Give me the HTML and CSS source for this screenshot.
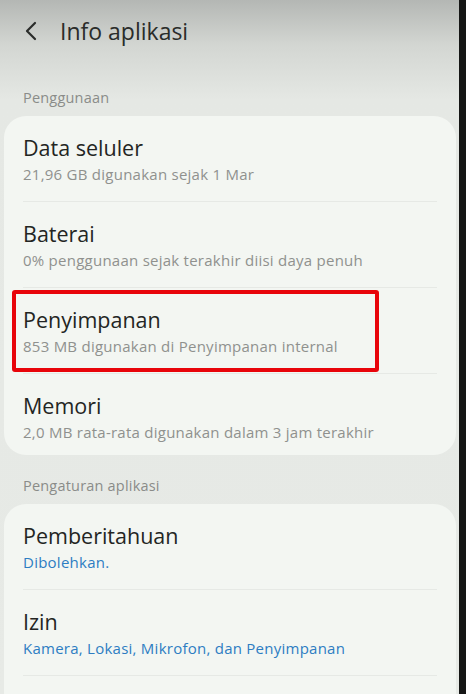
FILE: index.html
```html
<!DOCTYPE html>
<html lang="id">
  <head>
    <meta charset="utf-8">
    <meta name="viewport" content="width=device-width">
    <title>Info aplikasi</title>
    <link rel="stylesheet" href="styles.css">
  </head>
<body>
  <div class="screen">
    <header class="appbar">
      <svg class="back" width="14" height="20" viewBox="0 0 14 20">
        <path d="M11 2 L3 10 L11 18" fill="none" stroke="#2a2c2a" stroke-width="2.2" stroke-linecap="round" stroke-linejoin="round"/>
      </svg>
      <h1>Info aplikasi</h1>
    </header>

    <div class="section-label">Penggunaan</div>
    <div class="card">
      <div class="row">
        <div class="title">Data seluler</div>
        <div class="sub">21,96 GB digunakan sejak 1 Mar</div>
      </div>
      <div class="row">
        <div class="title">Baterai</div>
        <div class="sub">0% penggunaan sejak terakhir diisi daya penuh</div>
      </div>
      <div class="row marked">
        <div class="title">Penyimpanan</div>
        <div class="sub">853 MB digunakan di Penyimpanan internal</div>
        <div class="highlight"></div>
      </div>
      <div class="row last">
        <div class="title">Memori</div>
        <div class="sub">2,0 MB rata-rata digunakan dalam 3 jam terakhir</div>
      </div>
    </div>

    <div class="section-label">Pengaturan aplikasi</div>
    <div class="card">
      <div class="row">
        <div class="title">Pemberitahuan</div>
        <div class="sub blue">Dibolehkan.</div>
      </div>
      <div class="row">
        <div class="title">Izin</div>
        <div class="sub blue">Kamera, Lokasi, Mikrofon, dan Penyimpanan</div>
      </div>
      <div class="row"></div>
    </div>
  </div>
</body>
</html>
```

FILE: styles.css
```css
html, body {
  margin: 0;
  padding: 0;
  height: 100%;
  overflow: hidden;
}

body {
  background: #151615;
  font-family: "Open Sans", Roboto, sans-serif;
}

.screen {
  width: 459px;
  height: 694px;
  background: linear-gradient(#b4b7b4 0px, #d3d6d2 45px, #e5e8e4 100px, #e7eae6 694px);
  overflow: hidden;
}

.appbar {
  display: flex;
  align-items: center;
  height: 62px;
  padding-left: 24px;
}

.appbar .back {
  margin-right: 22px;
}

.appbar h1 {
  margin: 0;
  font-size: 23px;
  font-weight: 400;
  color: #2a2c2a;
}

.section-label {
  padding: 26px 0 9px 23px;
  font-size: 14.5px;
  color: #8a8c89;
  letter-spacing: 0.2px;
}

.card + .section-label {
  padding-top: 21px;
}

.card {
  margin: 0 3px 0 4px;
  background: #f3f6f2;
  border-radius: 22px;
  padding: 0 19px;
}

.row {
  position: relative;
  height: 86px;
  padding-top: 19px;
  box-sizing: border-box;
  border-top: 1px solid #e6e9e5;
}

.row:first-child {
  border-top: 0;
  height: 85px;
}

.row.last {
  height: 82px;
}

.title {
  font-size: 21.5px;
  color: #232523;
  line-height: 26px;
}

.sub {
  margin-top: 4px;
  font-size: 15px;
  color: #8f918e;
  line-height: 18px;
  letter-spacing: 0.25px;
}

.sub.blue {
  color: #2d7dc2;
}

.highlight {
  position: absolute;
  left: -11px;
  top: 2px;
  width: 367px;
  height: 82px;
  box-sizing: border-box;
  border: 4px solid #e8040a;
  border-radius: 3px;
}
```
